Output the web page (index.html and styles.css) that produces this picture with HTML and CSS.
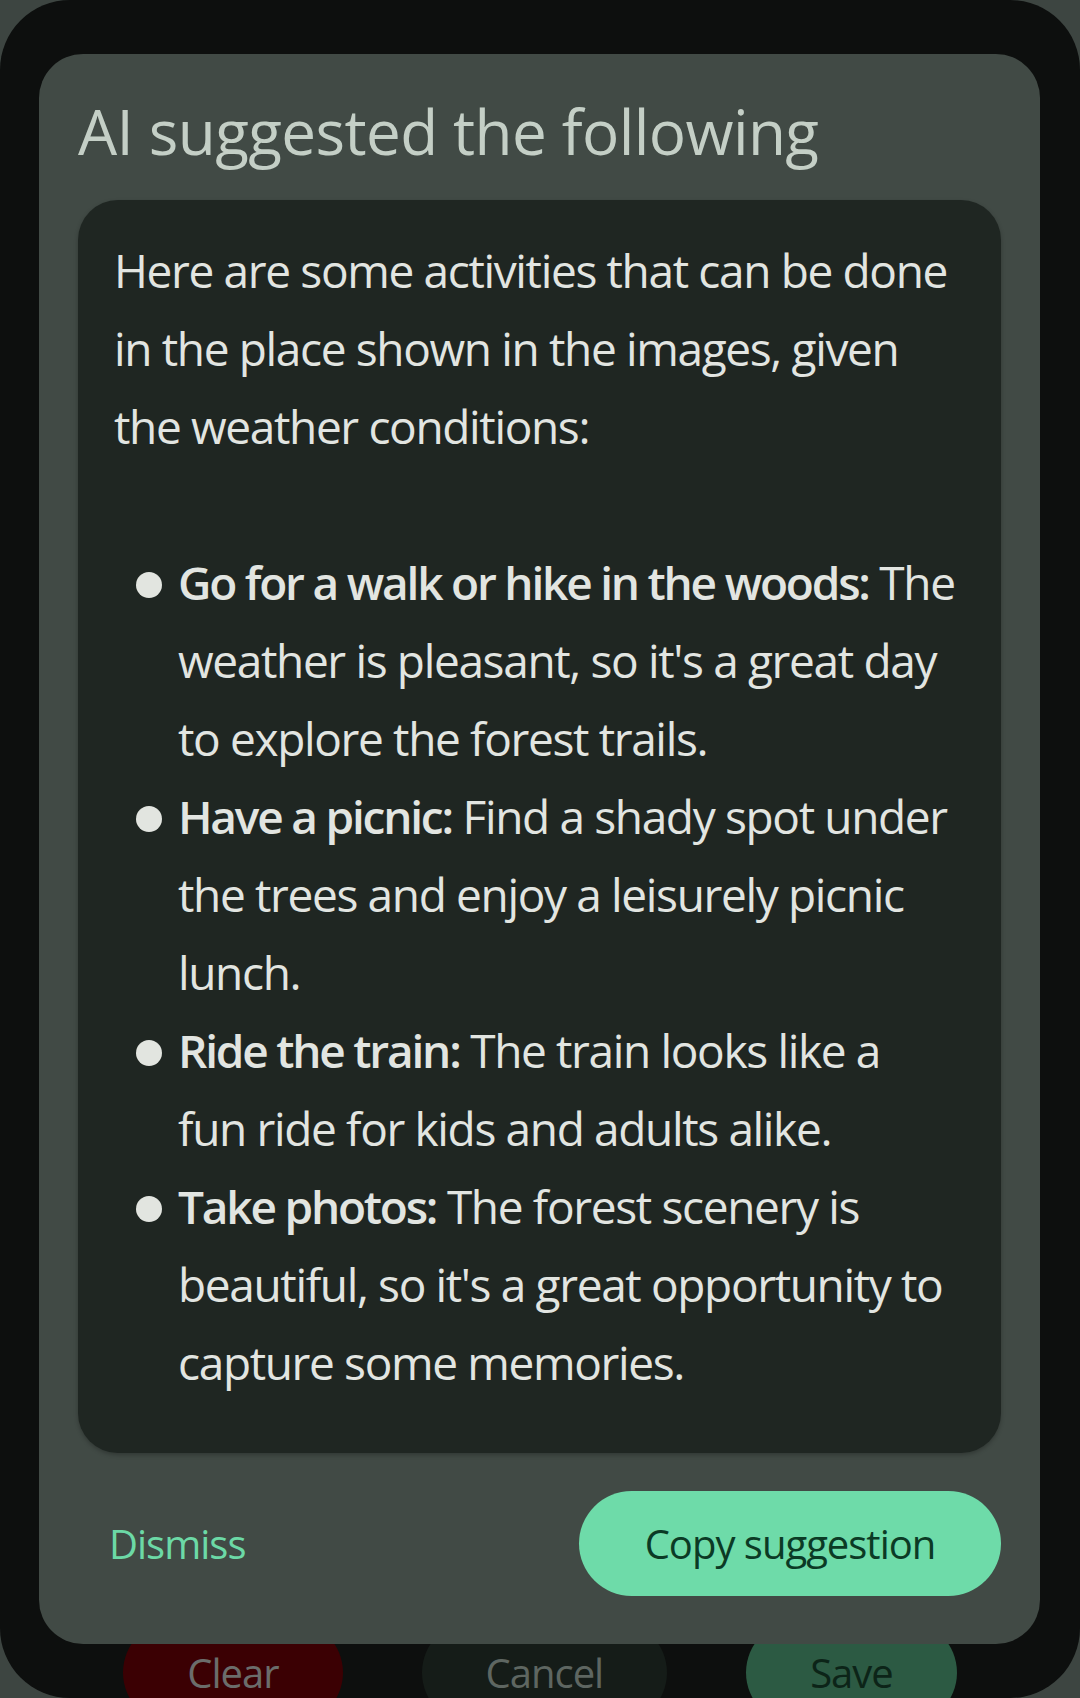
FILE: index.html
```html
<!DOCTYPE html>
<html lang="en">
<head>
<meta charset="utf-8">
<title>AI suggestion</title>
<link rel="stylesheet" href="styles.css">
</head>
<body>
<div class="screen">
  <div class="actions">
    <button class="pill pill-clear">Clear</button>
    <button class="pill pill-cancel">Cancel</button>
    <button class="pill pill-save">Save</button>
  </div>

  <div class="dialog" role="dialog">
    <h1 class="dialog-title">AI suggested the following</h1>
    <div class="suggestion">
      <p class="intro">Here are some activities that can be done in the place shown in the images, given the weather conditions:</p>
      <ul class="activities">
        <li><strong>Go for a walk or hike in the woods:</strong> The weather is pleasant, so it's a great day to explore the forest trails.</li>
        <li><strong>Have a picnic:</strong> Find a shady spot under the trees and enjoy a leisurely picnic lunch.</li>
        <li><strong>Ride the train:</strong> The train looks like a fun ride for kids and adults alike.</li>
        <li><strong>Take photos:</strong> The forest scenery is beautiful, so it's a great opportunity to capture some memories.</li>
      </ul>
    </div>
    <div class="dialog-footer">
      <button class="text-btn">Dismiss</button>
      <button class="copy-btn">Copy suggestion</button>
    </div>
  </div>
</div>
</body>
</html>
```

FILE: styles.css
```css
* { box-sizing: border-box; }

html, body {
  margin: 0;
  padding: 0;
}

body {
  width: 1080px;
  height: 1698px;
  overflow: hidden;
  background: #3d4541;
  font-family: "Open Sans", "Noto Sans", sans-serif;
}

.screen {
  position: relative;
  height: 1698px;
  border-radius: 70px;
  background: #0d0f0e;
  overflow: hidden;
  display: flex;
  flex-direction: column;
  justify-content: flex-end;
}

.actions {
  display: flex;
  justify-content: center;
  gap: 79px;
  margin-bottom: -27px;
}

.pill {
  height: 105px;
  border: 0;
  border-radius: 53px;
  padding: 0 64px;
  font-family: inherit;
  font-size: 40px;
  line-height: 1;
  letter-spacing: -1px;
  display: flex;
  align-items: center;
  justify-content: center;
}

.pill-clear { background: #3b0003; color: #6b6d6b; }
.pill-cancel { background: #151c18; color: #5e6661; }
.pill-save { background: #2c5a43; color: #0c2418; }

.dialog {
  position: absolute;
  left: 39px;
  top: 54px;
  width: 1001px;
  height: 1590px;
  border-radius: 44px;
  background: #414a45;
  padding: 46px 39px 48px;
  display: flex;
  flex-direction: column;
}

.dialog-title {
  margin: 0 0 38px;
  height: 62px;
  font-size: 62px;
  line-height: 62px;
  font-weight: 400;
  letter-spacing: -0.6px;
  color: #c4cfc6;
}

.suggestion {
  flex: 1;
  background: #1f2622;
  border-radius: 40px;
  padding: 31px 44px 0 36px;
  box-shadow: 0 2px 4px rgba(0, 0, 0, 0.25);
  color: #e2e5e1;
  font-size: 46px;
  line-height: 78px;
  letter-spacing: -1.35px;
}

.intro {
  margin: 0 0 78px;
}

.activities {
  list-style: none;
  margin: 0;
  padding: 0 0 0 64px;
}

.activities li {
  position: relative;
}

.activities li::before {
  content: "";
  position: absolute;
  left: -42px;
  top: 29px;
  width: 26px;
  height: 26px;
  border-radius: 50%;
  background: #e2e5e0;
}

.activities strong {
  font-weight: 600;
  letter-spacing: -2.2px;
}

.dialog-footer {
  margin-top: 38px;
  height: 105px;
  display: flex;
  align-items: center;
  justify-content: space-between;
}

.text-btn {
  border: 0;
  background: none;
  padding: 0 31px;
  font-family: inherit;
  font-size: 40px;
  letter-spacing: -1px;
  color: #6cd9a6;
}

.copy-btn {
  height: 105px;
  width: 422px;
  border: 0;
  border-radius: 53px;
  background: #6edba9;
  color: #0b3a25;
  font-family: inherit;
  font-size: 40px;
  letter-spacing: -1px;
}
```
